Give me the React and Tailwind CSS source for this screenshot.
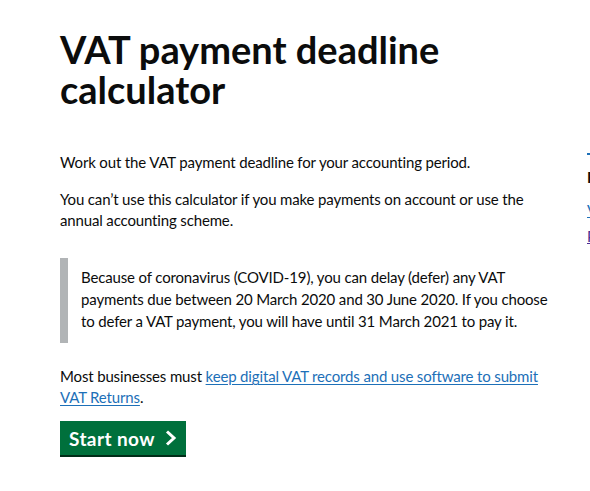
import React from 'react';

const font = { fontFamily: 'Lato, "Noto Sans", Arial, sans-serif' };

const App = () => {
  return (
    <div className="w-[590px] h-[491px] overflow-hidden bg-white text-[#0b0c0c]" style={font}>
      <div className="flex">
        <main className="w-[560px] shrink-0 pl-[60px] pt-[29px]">
          <h1 className="text-[38px] leading-[40px] font-bold mb-[43px]">
            VAT payment deadline calculator
          </h1>

          <div className="text-[15px] tracking-[-0.15px]">
            <p className="leading-[21px] mb-[16px]">
              Work out the VAT payment deadline for your accounting period.
            </p>
            <p className="leading-[21px] mb-[27px]">
              You can’t use this calculator if you make payments on account or use the annual accounting scheme.
            </p>

            <div className="border-l-[8px] border-[#b1b4b6] pl-[13px] pt-[8px] pb-[11px] mb-[23px]">
              <p className="leading-[22px]">
                Because of coronavirus (COVID-19), you can delay (defer) any VAT payments due between 20 March 2020 and 30 June 2020. If you choose to defer a VAT payment, you will have until 31 March 2021 to pay it.
              </p>
            </div>

            <p className="leading-[21px] mb-[13px]">
              Most businesses must{' '}
              <a href="#" className="text-[#1d70b8] underline decoration-1 underline-offset-2">
                keep digital VAT records and use software to submit VAT Returns
              </a>
              .
            </p>
          </div>

          <a
            href="#"
            className="inline-flex items-center gap-[10px] h-[34px] bg-[#00703c] text-white font-bold text-[19px] tracking-[0.4px] leading-none pl-[9px] pr-[9px] shadow-[0_2px_0_#002d18]"
          >
            Start now
            <svg width="12" height="16" viewBox="0 0 12 16" aria-hidden="true">
              <path d="M2 1.5 L9 8 L2 14.5" fill="none" stroke="white" strokeWidth="3" />
            </svg>
          </a>
        </main>

        <aside className="pl-[27px] pt-[153px] whitespace-nowrap">
          <div className="border-t-2 border-[#1d70b8] pt-[12px] w-[200px]">
            <h2 className="text-[15px] font-bold leading-[20px] mb-[12px]">Related content</h2>
            <ul className="text-[15px] leading-[22px] space-y-[4px]">
              <li><a href="#" className="text-[#1d70b8] underline">VAT Returns</a></li>
              <li><a href="#" className="text-[#4c2c92] underline">Pay your VAT bill</a></li>
            </ul>
          </div>
        </aside>
      </div>
    </div>
  );
};

export default App;
